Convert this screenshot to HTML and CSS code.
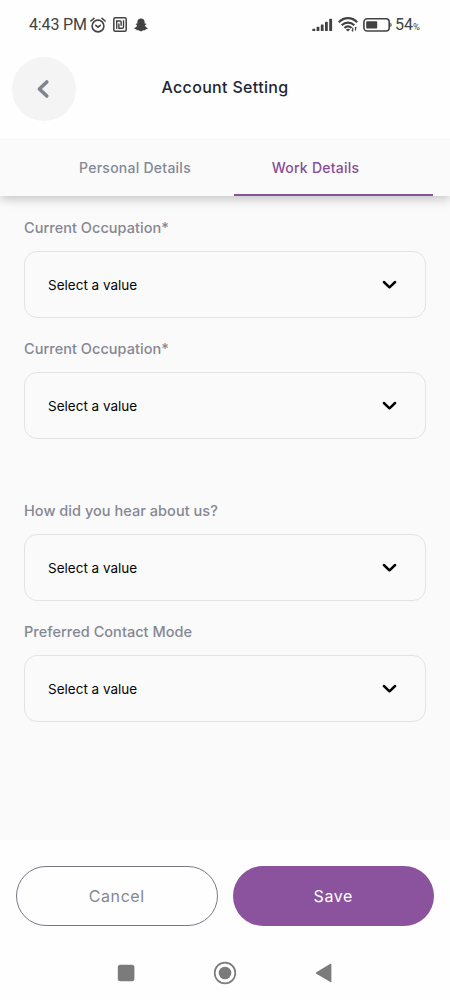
FILE: index.html
```html
<!DOCTYPE html>
<html lang="en">
<head>
<meta charset="utf-8">
<title>Account Setting</title>
<link rel="stylesheet" href="styles.css">
</head>
<body>
<svg class="defs" width="0" height="0">
  <symbol id="chevron" viewBox="0 0 16 10"><path d="M2.900 2 8.500 7.300 14.100 2" fill="none" stroke="#000" stroke-width="2.500" stroke-linecap="round" stroke-linejoin="round"/></symbol>
</svg>
<div class="screen">
  <div class="status">
    <span class="time">4:43 PM</span>
    <svg class="alarm" width="16" height="16" viewBox="0 0 16 16" fill="none" stroke="#424242" stroke-linecap="round"><circle cx="8" cy="9" r="5.900" stroke-width="1.600"/><path d="M.9 4 4 1.400M15.100 4 12 1.400" stroke-width="1.600"/><path d="M5.800 8.300 8 10.200l2.300-1.900" stroke-width="1.600"/></svg>
    <svg class="nfc" width="14" height="15" viewBox="0 0 14 15" fill="none" stroke="#424242" stroke-width="1.500"><rect x=".8" y=".8" width="12.400" height="13.400" rx="1.500"/><path d="M3.700 11.700V4h3.400q1 0 1 1v3.700M5.900 6.400v4.900h3.500q1.100 0 1.100-1V3.300" stroke-width="1.400"/></svg>
    <svg class="ghost" width="14" height="14" viewBox="0 0 14 14" fill="#424242"><path d="M7 .6c2.300 0 3.700 1.500 3.700 3.800v1.400l1.200-.2.500.7-1.500 1c.4 1.500 1.300 2.300 2.700 2.800l-.2.800-1.700.4-.4 1-1.900-.1L7 13.600l-2.400-1.400-1.900.1-.4-1-1.700-.4-.2-.8c1.400-.5 2.300-1.300 2.700-2.800l-1.500-1 .5-.7 1.200.2V4.400C3.300 2.100 4.700.6 7 .6z"/></svg>
    <svg class="signal" width="21" height="14" viewBox="0 0 21 14" fill="#424242"><rect x=".3" y="10.800" width="3" height="2.300" rx=".7"/><rect x="4.600" y="8.800" width="2.800" height="4.300" rx=".7"/><rect x="8.800" y="6.400" width="2.800" height="6.700" rx=".7"/><rect x="13" y="3.800" width="2.800" height="9.300" rx=".7"/><rect x="17.200" y=".8" width="2.900" height="12.300" rx=".7"/></svg>
    <svg class="wifi" width="20" height="15" viewBox="0 0 20 15" fill="none" stroke="#424242" stroke-width="2.200"><path d="M.8 5.300C6-.2 14-.2 19.200 5.300M3.700 8.300c3.700-3.700 8.900-3.700 12.600 0M6.500 11c2-2.100 5-2.100 7 0"/><path d="m7.900 12.400 2.100 2 2.100-2Q10 11 7.900 12.400z" fill="#424242" stroke="none"/><path d="M14.700 10.800v3.600M17.500 9.900v3.500M13.800 13l.9 1.200M17.500 10.200l.9 1" stroke-width="1.200"/></svg>
    <svg class="battery" width="30" height="14" viewBox="0 0 30 14"><rect x=".9" y=".8" width="25.300" height="12.200" rx="3.300" fill="none" stroke="#424242" stroke-width="1.600"/><rect x="3.200" y="3.200" width="11" height="7.400" rx=".8" fill="#424242"/><path d="M27.400 4.800c1.600.3 1.600 4 0 4.400z" fill="#424242"/></svg>
    <span class="level">54<small>%</small></span>
  </div>
  <header class="header">
    <button class="back" aria-label="Back"><svg width="14" height="22" viewBox="0 0 14 22"><path d="M10.800 4 3.400 11l7.400 7" fill="none" stroke="#81838f" stroke-width="3.600" stroke-linecap="round" stroke-linejoin="round"/></svg></button>
    <h1 class="title">Account Setting</h1>
  </header>
  <nav class="tabs">
    <a class="tab"><span>Personal Details</span></a>
    <a class="tab active"><span>Work Details</span></a>
  </nav>
  <main class="form">
    <div class="field"><div class="label">Current Occupation*</div><div class="select"><span>Select a value</span><svg width="16" height="10"><use href="#chevron"/></svg></div></div>
    <div class="field"><div class="label">Current Occupation*</div><div class="select"><span>Select a value</span><svg width="16" height="10"><use href="#chevron"/></svg></div></div>
    <div class="field separated"><div class="label">How did you hear about us?</div><div class="select"><span>Select a value</span><svg width="16" height="10"><use href="#chevron"/></svg></div></div>
    <div class="field"><div class="label">Preferred Contact Mode</div><div class="select"><span>Select a value</span><svg width="16" height="10"><use href="#chevron"/></svg></div></div>
  </main>
  <footer class="actions">
    <button class="btn cancel">Cancel</button>
    <button class="btn save">Save</button>
  </footer>
  <div class="system">
    <svg width="18" height="18" viewBox="0 0 18 18"><rect x=".8" y=".8" width="16.600" height="16.400" rx="2.500" fill="#7b7b7b"/></svg>
    <svg width="24" height="24" viewBox="0 0 24 24"><circle cx="12" cy="12" r="10.300" fill="none" stroke="#7b7b7b" stroke-width="1.700"/><circle cx="12" cy="12" r="6.300" fill="#7b7b7b"/></svg>
    <svg width="18" height="20" viewBox="0 0 18 20"><path d="M1.300 9.300 15.400.8q1-.5 1 .6v17.200q0 1-1 .5L1.300 10.700q-.9-.7 0-1.400z" fill="#7b7b7b"/></svg>
  </div>
</div>
</body>
</html>
```
FILE: styles.css
```css
* { box-sizing: border-box; }
body { margin: 0; background: #fefefe; font-family: Inter, "Open Sans", sans-serif; }
button { font-family: inherit; padding: 0; border: 0; }
svg { display: block; flex: none; }
.defs { position: absolute; }
.screen { width: 450px; height: 1000px; display: flex; flex-direction: column; overflow: hidden; }
.status { height: 49px; flex: none; display: flex; align-items: center; padding: 0 28px 0 29px; color: #424242; }
.time { width: 61px; font-family: Roboto, sans-serif; font-size: 16px; letter-spacing: -0.15px; white-space: nowrap; }
.nfc { margin-left: 7px; }
.ghost { margin-left: 7px; }
.signal { margin-left: auto; }
.wifi { margin-left: 5px; }
.battery { margin-left: 5px; }
.level { width: 27px; margin-left: 2px; font-family: Roboto, sans-serif; font-size: 16px; font-weight: 400; letter-spacing: 0; white-space: nowrap; }
.level small { font-size: 9.500px; font-weight: 400; }
.header { height: 90px; flex: none; display: grid; grid-template-columns: 64px 1fr 64px; align-items: start; padding: 8px 12px 0; }
.back { width: 64px; height: 64px; border-radius: 50%; background: #f4f4f4; display: flex; align-items: center; justify-content: center; padding-right: 2px; }
.title { margin: 18px 0 0; font-size: 16px; line-height: 24px; font-weight: 500; letter-spacing: 0.330px; text-align: center; color: #1f2634; }
.tabs { height: 57px; flex: none; display: grid; grid-template-columns: 1fr 1fr; padding: 0 17px; background: #fafafa; box-shadow: 0 3px 10px rgba(0, 0, 0, 0.22); clip-path: inset(0 0 -20px 0); z-index: 1; border-top: 1px solid #f5f5f5; }
.tab { display: flex; align-items: center; justify-content: center; font-size: 14px; font-weight: 450; color: #858897; letter-spacing: 0.250px; padding-bottom: 2px; }
.tab:first-child { padding-left: 28px; }
.tab.active { color: #874e98; border-bottom: 2px solid #8b529c; margin-left: 9px; padding: 0 36px 0 0; }
.form { height: 644px; flex: none; padding: 19.600px 24px 0; background: #fafafa; display: flex; flex-direction: column; gap: 18.900px; }
.separated { margin-top: 40.400px; }
.label { height: 24px; margin-bottom: 11.400px; font-size: 14.500px; font-weight: 500; line-height: 24px; letter-spacing: 0.040px; color: #858793; }
.select { height: 67px; border: 1px solid #e3e3e4; border-radius: 13px; display: flex; align-items: center; justify-content: space-between; padding: 1px 28px 0 23px; font-size: 13.500px; color: #050505; }
.actions { height: 105px; flex: none; display: grid; grid-template-columns: 1fr 1fr; gap: 15px; padding: 26px 16px 0; }
.btn { height: 60px; border-radius: 30px; font-size: 16px; letter-spacing: 0.600px; }
.cancel { background: #fefefe; border: 1px solid #777986; color: #858894; }
.save { background: #8b529e; color: #fff; }
.system { height: 55px; flex: none; display: flex; align-items: center; justify-content: space-between; padding: 0 117px; }
```
